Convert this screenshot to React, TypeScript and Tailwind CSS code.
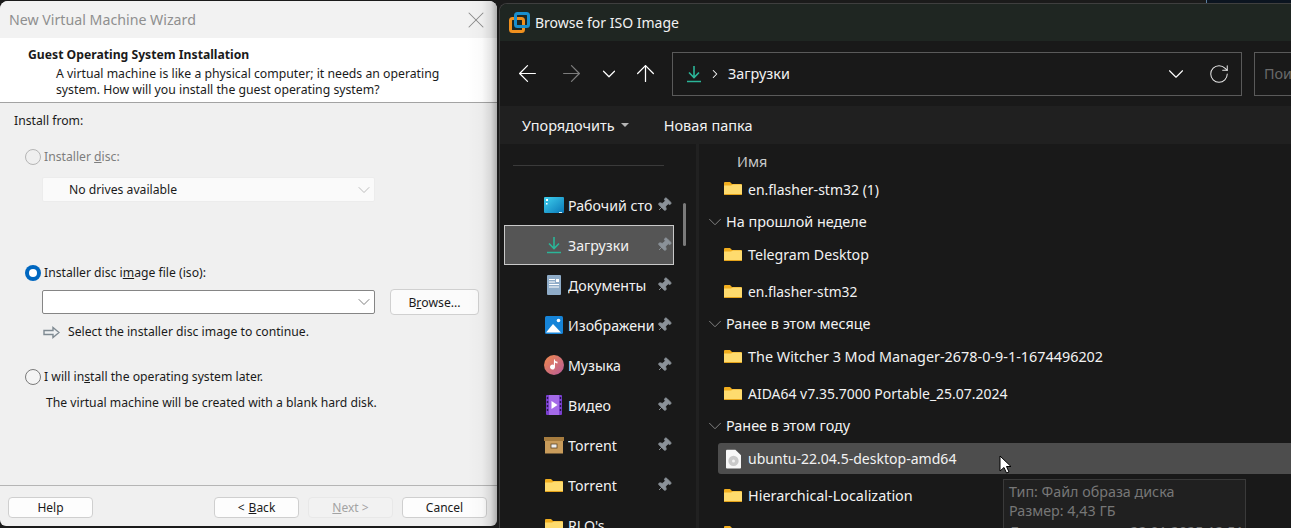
import { ArrowLeft, ArrowRight, ArrowUp, ChevronDown, ChevronRight, RotateCw, Pin, X } from "lucide-react";

const ff = "font-['Noto_Sans','Open_Sans',sans-serif]";

function Radio({ state }: { state: "off" | "dim" | "on" }) {
  if (state === "on") {
    return (
      <span className="flex h-4 w-4 items-center justify-center rounded-full bg-[#0067c0]">
        <span className="h-2 w-2 rounded-full bg-white" />
      </span>
    );
  }
  return <span className={`h-4 w-4 rounded-full border ${state === "dim" ? "border-[#b5b5b5] bg-[#efefef]" : "border-[#7a7a7a] bg-[#f4f4f4]"}`} />;
}

function Btn({ children, w, dim }: { children: React.ReactNode; w: string; dim?: boolean }) {
  return (
    <div className={`flex h-[21px] items-center justify-center rounded-[4px] border text-[12px] ${w} ${dim ? "border-[#e8e8e8] bg-[#f2f2f2] text-[#a3a3a3]" : "border-[#cfcfcf] bg-[#fdfdfd] text-[#1a1a1a]"}`}>
      {children}
    </div>
  );
}

function Wizard() {
  return (
    <div className={`absolute left-0 top-[1px] flex h-[525px] w-[497px] flex-col overflow-hidden rounded-t-[8px] rounded-b-[6px] bg-[#f0f0f0] ${ff} text-[#1a1a1a]`}>
      <div className="flex h-[37px] shrink-0 items-center justify-between bg-[#f2f2f2] pl-[9px] pr-[7px]">
        <span className="text-[14.2px] text-[#8f8f8f]">New Virtual Machine Wizard</span>
        <X className="h-[28px] w-[28px] text-[#8a8a8a]" strokeWidth={0.9} />
      </div>
      <div className="h-[65px] shrink-0 border-b border-[#a3a3a3] bg-white pl-[28px] pt-[8px]">
        <div className="text-[12.2px] font-bold leading-[17px]">Guest Operating System Installation</div>
        <div className="pl-[28px] pt-[3px] text-[12.25px] leading-[16px]">
          <div>A virtual machine is like a physical computer; it needs an operating</div>
          <div>system. How will you install the guest operating system?</div>
        </div>
      </div>
      <div className="flex flex-1 flex-col pl-[14px] text-[12.2px]">
        <div className="mt-[10px] flex h-[17px] items-center">Install from:</div>
        <div className="mt-[18px] flex h-[18px] items-center gap-[3px] pl-[11px] text-[#7d7d7d]">
          <Radio state="dim" />
          <span>Installer <u>d</u>isc:</span>
        </div>
        <div className="ml-[28px] mt-[11px] flex h-[25px] w-[333px] items-center justify-between rounded-[2px] border border-[#ececec] bg-[#fafafa] pl-[26px] text-[#1a1a1a]">
          <span className="pt-[1px]">No drives available</span>
          <ChevronDown className="h-[20px] w-[20px] text-[#a8a8a8]" strokeWidth={0.9} />
        </div>
        <div className="mt-[62px] flex h-[18px] items-center gap-[3px] pl-[11px]">
          <Radio state="on" />
          <span>Installer disc i<u>m</u>age file (iso):</span>
        </div>
        <div className="ml-[28px] mt-[7px] flex items-center">
          <div className="flex h-[24px] w-[333px] items-center justify-end rounded-[2px] border border-[#858585] bg-white">
            <ChevronDown className="h-[20px] w-[20px] text-[#555]" strokeWidth={0.9} />
          </div>
          <div className="ml-[15px] flex h-[26px] w-[89px] items-center justify-center rounded-[4px] border border-[#d0d0d0] bg-[#fbfbfb] pt-[2px]">
            B<u>r</u>owse...
          </div>
        </div>
        <div className="ml-[29px] mt-[9px] flex h-[17px] items-center gap-[8px]">
          <svg width="17" height="13" viewBox="0 0 17 13">
            <path d="M1 4.5h9V1.5L16 6.5l-6 5v-3H1z" fill="#eef0f2" stroke="#7f8a92" strokeWidth="1.4" />
          </svg>
          <span>Select the installer disc image to continue.</span>
        </div>
        <div className="mt-[27px] flex h-[18px] items-center gap-[3px] pl-[11px]">
          <Radio state="off" />
          <span>I will in<u>s</u>tall the operating system later.</span>
        </div>
        <div className="ml-[32px] mt-[8px] h-[17px] leading-[17px]">The virtual machine will be created with a blank hard disk.</div>
      </div>
      <div className="flex h-[41px] shrink-0 items-start justify-between border-t border-[#b5b5b5] pl-[8px] pr-[10px] pt-[11px]">
        <Btn w="w-[85px]">Help</Btn>
        <div className="flex gap-[9px]">
          <Btn w="w-[85px]">&lt; <u className="ml-1">B</u>ack</Btn>
          <Btn w="w-[85px]" dim><u>N</u>ext &gt;</Btn>
          <Btn w="w-[85px]">Cancel</Btn>
        </div>
      </div>
      <div className="pointer-events-none absolute inset-y-0 right-0 w-[30px] bg-[linear-gradient(to_right,rgba(0,0,0,0),rgba(0,0,0,0.02)_50%,rgba(0,0,0,0.1)_80%,rgba(0,0,0,0.28))]" />
    </div>
  );
}

function Folder() {
  return (
    <svg width="18" height="15" viewBox="0 0 18 15" className="shrink-0">
      <path d="M0 2a1 1 0 0 1 1-1h5l2 2h9a1 1 0 0 1 1 1v2H0z" fill="#f0ad1e" />
      <path d="M0 4.5h7l2-1h8a1 1 0 0 1 1 1V13a1 1 0 0 1-1 1H1a1 1 0 0 1-1-1z" fill="#fedb6e" />
      <path d="M0 13h18a1 1 0 0 1-1 1H1a1 1 0 0 1-1-1z" fill="#e5a31a" />
    </svg>
  );
}

function Down({ size = 18 }: { size?: number }) {
  return (
    <svg width={size} height={size} viewBox="0 0 18 18" fill="none" stroke="#2bb598" strokeWidth="1.6" className="shrink-0">
      <path d="M9 1v11M4 7.5 9 12.5l5-5" />
      <path d="M2 16.5h14" />
    </svg>
  );
}

const side: { label: string; icon: React.ReactNode; active?: boolean; pin?: boolean }[] = [
  {
    label: "Рабочий сто",
    pin: true,
    icon: (
      <svg width="20" height="17" viewBox="0 0 20 17">
        <defs>
          <linearGradient id="dk" x1="0" y1="0" x2="1" y2="1">
            <stop offset="0" stopColor="#3fd0ee" />
            <stop offset="1" stopColor="#0a78b8" />
          </linearGradient>
        </defs>
        <rect width="20" height="16" rx="1" fill="url(#dk)" />
        <rect x="2" y="2" width="2" height="2" fill="#fff" />
        <rect x="2" y="6" width="1.5" height="1.5" fill="#fff" />
        <rect x="15" y="15" width="3" height="1" fill="#cfefff" />
      </svg>
    ),
  },
  { label: "Загрузки", icon: <Down />, active: true, pin: true },
  {
    label: "Документы",
    pin: true,
    icon: (
      <svg width="14" height="20" viewBox="0 0 14 20">
        <rect width="14" height="20" rx="1" fill="#8facc8" />
        <path d="M2 4h6v1H2zM2 6.5h6v1H2zM2 9h10v1H2zM2 11.5h10v1H2z" fill="#fff" />
        <rect x="9" y="4" width="3" height="3" fill="#fff" />
      </svg>
    ),
  },
  {
    label: "Изображени",
    pin: true,
    icon: (
      <svg width="18" height="18" viewBox="0 0 18 18">
        <rect width="18" height="18" rx="1.5" fill="#1684d8" />
        <path d="M1 16.5 8 8l8 8.5z" fill="#fff" />
        <circle cx="13.5" cy="4.5" r="1.8" fill="#fff" />
      </svg>
    ),
  },
  {
    label: "Музыка",
    pin: true,
    icon: (
      <svg width="20" height="20" viewBox="0 0 20 20">
        <defs>
          <linearGradient id="mu" x1="0" y1="0" x2="1" y2="1">
            <stop offset="0" stopColor="#f08a4b" />
            <stop offset="1" stopColor="#b85a9a" />
          </linearGradient>
        </defs>
        <circle cx="10" cy="10" r="10" fill="url(#mu)" />
        <path d="M10 4.5h1v7.5a2.5 2.5 0 1 1-1.2-2.1z M10.5 4.5c.5 1.6 1.6 2 3 2.3V8.4c-1.3-.2-2.4-.6-3-1.4z" fill="#fff" />
      </svg>
    ),
  },
  {
    label: "Видео",
    pin: true,
    icon: (
      <svg width="16" height="20" viewBox="0 0 16 20">
        <rect width="16" height="20" rx="1" fill="#7a3fd0" />
        <rect x="3" y="0" width="10" height="20" fill="#a46ae8" />
        <path d="M5.5 6v8l6-4z" fill="#fff" />
        <path d="M.8 2h1.4v2H.8zM.8 6h1.4v2H.8zM.8 10h1.4v2H.8zM.8 14h1.4v2H.8zM13.8 2h1.4v2h-1.4zM13.8 6h1.4v2h-1.4zM13.8 10h1.4v2h-1.4zM13.8 14h1.4v2h-1.4z" fill="#2a1650" />
      </svg>
    ),
  },
  {
    label: "Torrent",
    pin: true,
    icon: (
      <svg width="20" height="17" viewBox="0 0 20 17">
        <rect width="20" height="4" fill="#a67c3f" />
        <rect x="1" y="4" width="18" height="12.5" fill="#c99c5b" />
        <rect x="7" y="7" width="6" height="4" fill="#eee" stroke="#5c4526" strokeWidth="0.8" />
      </svg>
    ),
  },
  { label: "Torrent", pin: true, icon: <Folder /> },
  { label: "RLO's", icon: <Folder /> },
];

const files: { h: string; t: string; label: string; group?: boolean; sel?: boolean }[] = [
  { h: "h-[33px]", t: "text-[14px]", label: "en.flasher-stm32 (1)" },
  { h: "h-[33px]", t: "text-[14.4px]", label: "На прошлой неделе", group: true },
  { h: "h-[33px]", t: "text-[14.2px]", label: "Telegram Desktop" },
  { h: "h-[33px] mt-[4px]", t: "text-[13.8px]", label: "en.flasher-stm32" },
  { h: "h-[33px] -mt-[1px]", t: "text-[14.4px]", label: "Ранее в этом месяце", group: true },
  { h: "h-[33px]", t: "text-[14.4px]", label: "The Witcher 3 Mod Manager-2678-0-9-1-1674496202" },
  { h: "h-[33px] mt-[4px]", t: "text-[13.97px]", label: "AIDA64 v7.35.7000 Portable_25.07.2024" },
  { h: "h-[33px] -mt-[1px]", t: "text-[14.4px]", label: "Ранее в этом году", group: true },
  { h: "h-[33px]", t: "text-[14.06px]", label: "ubuntu-22.04.5-desktop-amd64", sel: true },
  { h: "h-[33px] mt-[4px]", t: "text-[14.4px]", label: "Hierarchical-Localization" },
  { h: "h-[33px] mt-[4px]", t: "text-[14.4px]", label: "" },
];

function Explorer() {
  return (
    <div className={`absolute left-[499px] top-[3px] flex h-[525px] w-[792px] flex-col overflow-hidden rounded-tl-[8px] border-l border-t border-[#3f3f3f] bg-[#191919] ${ff} text-[#f2f2f2]`}>
      <div className="flex h-[37px] shrink-0 items-center bg-[#1f2622] pl-[9px]">
        <svg width="21" height="21" viewBox="0 0 21 21" fill="none" strokeWidth="3">
          <rect x="1.5" y="6.5" width="13" height="13" rx="2" stroke="#f0901e" />
          <rect x="6.5" y="1.5" width="13" height="13" rx="2" stroke="#1a8fcf" />
        </svg>
        <span className="ml-[5px] text-[14px]">Browse for ISO Image</span>
      </div>
      <div className="flex h-[65px] shrink-0 items-center overflow-hidden bg-[#191919] pl-[14px]">
        <ArrowLeft className="h-[27px] w-[27px] shrink-0 text-white" strokeWidth={1.1} />
        <ArrowRight className="ml-[17px] h-[27px] w-[27px] shrink-0 text-[#7c7c7c]" strokeWidth={1.1} />
        <ChevronDown className="ml-[13px] h-[22px] w-[22px] shrink-0 text-white" strokeWidth={1.3} />
        <ArrowUp className="ml-[12px] h-[27px] w-[27px] shrink-0 text-white" strokeWidth={1.1} />
        <div className="ml-[13px] flex h-[44px] w-[570px] shrink-0 items-center border border-[#5a5a5a] pl-[12px] pr-[11px]">
          <Down />
          <ChevronRight className="ml-[5px] h-[14px] w-[14px] shrink-0 text-white" strokeWidth={1.8} />
          <span className="ml-[6px] text-[14.4px]">Загрузки</span>
          <ChevronDown className="ml-auto h-[26px] w-[26px] shrink-0 text-white" strokeWidth={1} />
          <RotateCw className="ml-[19px] h-[22px] w-[22px] shrink-0 text-[#e8e8e8]" strokeWidth={1.1} />
        </div>
        <div className="ml-[12px] flex h-[44px] w-[60px] shrink-0 items-center overflow-hidden border border-r-0 border-[#5a5a5a] pl-[9px] text-[14.4px] text-[#6a6a6a]">Поиск</div>
      </div>
      <div className="flex h-[38px] shrink-0 items-center bg-[#202020] pl-[22px] text-[14.5px]">
        <span className="pt-[1px]">Упорядочить</span>
        <span className="ml-[6px] h-0 w-0 border-x-[4px] border-t-[4px] border-x-transparent border-t-[#b5b5b5]" />
        <span className="ml-[35px] pt-[1px]">Новая папка</span>
      </div>
      <div className="flex min-h-0 flex-1">
        <div className="relative w-[199px] shrink-0 border-r-[3px] border-[#212121] pl-[4px]">
          <div className="ml-[9px] mt-[21px] h-px w-[151px] bg-[#3a3a3a]" />
          <div className="mt-[19px]">
            {side.map((s, i) => (
              <div key={i} className={`flex h-[40px] w-[170px] items-center ${s.active ? "border border-[#c9c9c9] bg-[#555555]" : "border border-transparent"}`}>
                <div className="flex w-[63px] shrink-0 justify-end pr-[3px]">
                  <div className="flex w-[22px] justify-center">{s.icon}</div>
                </div>
                <span className="w-[86px] overflow-hidden whitespace-nowrap pt-[1px] text-[14.2px]">{s.label}</span>
                {s.pin && <Pin className="ml-[2px] h-[16px] w-[16px] shrink-0 rotate-45 text-[#8b9299]" fill="#8b9299" strokeWidth={1.4} />}
              </div>
            ))}
          </div>
          <div className="absolute left-[183px] top-[59px] h-[43px] w-[3px] rounded-full bg-[#7a7a7a]" />
        </div>
        <div className="relative min-w-0 flex-1 overflow-hidden">
          <div className="flex h-[28px] items-end pl-[38px] text-[14.4px] leading-[20px] text-[#c9c9c9]">Имя</div>
          <div>
            {files.map((f, i) => (
              <div key={i} className={`flex ${f.h} ${f.t} items-center whitespace-nowrap ${f.group ? "pl-[5px]" : "pl-[25px]"}`}>
                {f.group ? (
                  <>
                    <ChevronDown className="h-[22px] w-[22px] shrink-0 text-[#8a8a8a]" strokeWidth={1} />
                    <span>{f.label}</span>
                  </>
                ) : f.sel ? (
                  <div className="-ml-[6px] flex h-[31px] flex-1 items-center rounded-l-[3px] bg-[#4d4d4d] pl-[8px]">
                    <svg width="15" height="20" viewBox="0 0 16 20" className="shrink-0">
                      <path d="M0 1a1 1 0 0 1 1-1h9l6 6v13a1 1 0 0 1-1 1H1a1 1 0 0 1-1-1z" fill="#f7f7f7" />
                      <circle cx="8" cy="12" r="5.5" fill="#c9c9c9" />
                      <circle cx="8" cy="12" r="1.6" fill="#f2f2f2" />
                    </svg>
                    <span className="ml-[7px]">{f.label}</span>
                  </div>
                ) : (
                  <>
                    <Folder />
                    <span className="ml-[6px] pt-[1px]">{f.label}</span>
                  </>
                )}
              </div>
            ))}
          </div>
        </div>
      </div>
    </div>
  );
}

export default function App() {
  return (
    <div className="relative h-[528px] w-[1291px] overflow-hidden bg-[#1b1b1b]">
      <div className="absolute left-[1206px] top-0 h-[3px] w-[85px] border-l border-[#5b7f9f] bg-[#0b1420]" />
      <Wizard />
      <Explorer />
      <div className={`absolute left-[1003px] top-[479px] h-[70px] w-[243px] border border-[#3a3a3a] bg-[#202020] pl-[5px] pt-[2px] text-[14.3px] leading-[19px] text-[#777777] ${ff}`}>
        <div>Тип: Файл образа диска</div>
        <div>Размер: 4,43 ГБ</div>
        <div className="pt-[2px]">Дата изменения: 22.01.2025 12:51</div>
      </div>
      <svg className="absolute left-[999px] top-[455px]" width="13" height="20" viewBox="0 0 13 20">
        <path d="M1 1v15l4-3.5L7.5 18l2.5-1-2.5-5.5H12z" fill="#fff" stroke="#000" strokeWidth="1" />
      </svg>
    </div>
  );
}
